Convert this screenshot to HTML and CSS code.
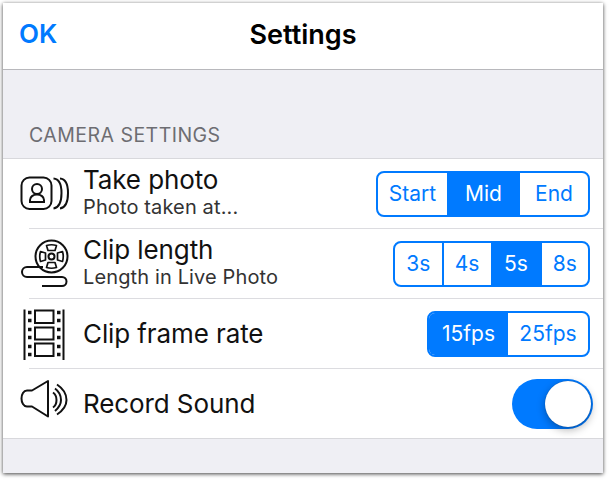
FILE: index.html
```html
<!DOCTYPE html>
<html lang="en">
<head>
<meta charset="utf-8">
<title>Settings</title>
<link rel="stylesheet" href="styles.css">
</head>
<body>
<div class="window">
  <header class="nav">
    <a class="nav-ok">OK</a>
    <h1 class="nav-title">Settings</h1>
  </header>
  <div class="section-label">CAMERA SETTINGS</div>
  <div class="list">
    <div class="row">
      <svg class="icon" viewBox="0 -2.500 60 60" fill="none" stroke="#111" stroke-width="2">
        <rect x="6.500" y="11" width="30" height="31.500" rx="8"/>
        <circle cx="22" cy="22.500" r="5"/>
        <path d="M15 35.500v-2c0-3 3-5.500 7-5.500s7 2.500 7 5.500v2z"/>
        <path d="M38.500 12C44.500 12.500 46.500 19 46.500 26.500S44.500 41 38.500 42"/>
        <path d="M45 12C51 12.500 53 19 53 26.500S51 41 45 42"/>
      </svg>
      <div class="text two">
        <div class="title">Take photo</div>
        <div class="sub">Photo taken at...</div>
      </div>
      <div class="seg">
        <span class="opt w69">Start</span><span class="opt on w73">Mid</span><span class="opt w68">End</span>
      </div>
    </div>
    <div class="sep"></div>
    <div class="row">
      <svg class="icon" viewBox="0 -2.500 60 60" fill="none" stroke="#111" stroke-width="2">
        <circle cx="36.500" cy="20" r="16"/>
        <circle cx="36.500" cy="20" r="3"/>
        <g stroke-width="1.700" stroke-linejoin="round">
          <path d="M31.500 9q5-1.500 10 0l-1.500 5h-7z"/>
          <path d="M31.500 31q5 1.500 10 0l-1.500-5h-7z"/>
          <path d="M25.500 15q-1.500 5 0 10l5-1.500v-7z"/>
          <path d="M47.500 15q1.500 5 0 10l-5-1.500v-7z"/>
        </g>
        <path d="M28 30.500H12A5 5 0 0 0 12 40.500H47A4.500 4.500 0 0 1 47 49.500H27"/>
      </svg>
      <div class="text two">
        <div class="title">Clip length</div>
        <div class="sub">Length in Live Photo</div>
      </div>
      <div class="seg">
        <span class="opt w46">3s</span><span class="opt w49 div">4s</span><span class="opt on w51">5s</span><span class="opt w46">8s</span>
      </div>
    </div>
    <div class="sep"></div>
    <div class="row">
      <svg class="icon" viewBox="0 -2.500 60 60" fill="none" stroke="#111" stroke-width="2">
        <path d="M9.500 3V53.500M48.500 3V53.500"/>
        <rect x="20" y="4" width="18.500" height="12.500"/>
        <rect x="20" y="21" width="18.500" height="12"/>
        <rect x="20" y="37" width="18.500" height="12.500"/>
        <path d="M13 6h3.500M13 14h3.500M13 23h3.500M13 31h3.500M13 40h3.500M13 48h3.500M42 6h3.500M42 14h3.500M42 23h3.500M42 31h3.500M42 40h3.500M42 48h3.500" stroke-width="3.500"/>
      </svg>
      <div class="text">
        <div class="title">Clip frame rate</div>
      </div>
      <div class="seg">
        <span class="opt on w79">15fps</span><span class="opt w80">25fps</span>
      </div>
    </div>
    <div class="sep"></div>
    <div class="row">
      <svg class="icon" viewBox="0 -2.500 60 60" fill="none" stroke="#111" stroke-width="2">
        <path d="M33 4.500V40L17 30h-5C8.500 30 6.500 26 6.500 22S8.500 14 12 14h5z" stroke-linejoin="round"/>
        <path d="M38 16c3 2 3.500 4.500 3.500 7.500S41 29 38 31"/>
        <path d="M40 12c4 3 6 7 6 11.500S44 31 40 34.500"/>
        <path d="M42 8c6 4 9.500 9 9.500 15.500S48 34 42 38"/>
      </svg>
      <div class="text">
        <div class="title">Record Sound</div>
      </div>
      <div class="switch"><div class="knob"></div></div>
    </div>
  </div>
  <div class="footer"></div>
</div>
</body>
</html>
```
FILE: styles.css
```css
* { box-sizing: border-box; }
html, body { margin: 0; padding: 0; background: #fff; }
body { width: 610px; height: 480px; overflow: hidden; font-family: Inter, "Noto Sans", sans-serif; }
.window {
  margin: 3px 0 0 3px;
  width: 600px;
  height: 470px;
  background: #efeff4;
  box-shadow: 0 1px 4px rgba(0,0,0,.75);
  display: flex;
  flex-direction: column;
}
.nav {
  height: 67px;
  flex: none;
  background: #fff;
  border-bottom: 1px solid #b8b8bc;
  display: flex;
  align-items: center;
  justify-content: center;
  position: relative;
}
.nav-ok {
  position: absolute;
  left: 16px;
  top: 14px;
  font-size: 26px;
  line-height: 34px;
  font-weight: 600;
  color: #007aff;
}
.nav-title {
  margin: 0 0 2px;
  font-size: 27px;
  font-weight: 600;
  color: #000;
  line-height: 34px;
}
.section-label {
  height: 89px;
  flex: none;
  padding: 53px 0 0 26px;
  font-size: 19.500px;
  line-height: 24px;
  letter-spacing: .47px;
  color: #6d6d72;
  border-bottom: 1px solid #d8d8dc;
}
.list { background: #fff; flex: none; }
.row {
  height: 69px;
  display: flex;
  align-items: center;
  padding: 0 13px 0 12px;
}
.sep { height: 1px; margin-left: 26px; background: #dcdce0; }
.icon { width: 60px; height: 60px; flex: none; margin-right: 9px; }
.text { flex: 1; min-width: 0; margin-left: -1px; }
.text.two { padding-bottom: 4px; }
.title { font-size: 26px; line-height: 31px; letter-spacing: -.1px; color: #111; }
.sub { font-size: 20px; line-height: 25px; letter-spacing: .13px; color: #333; }
.seg {
  display: flex;
  flex: none;
  height: 46px;
  border: 2px solid #007aff;
  border-radius: 8px;
  overflow: hidden;
  color: #007aff;
  font-size: 21px;
}
.opt { display: flex; align-items: center; justify-content: center; }
.opt.on { background: #007aff; color: #fff; }
.opt.div { border-left: 2px solid #007aff; }
.w46 { width: 46.500px; }
.w49 { width: 49px; }
.w51 { width: 51px; }
.w68 { width: 68px; }
.w69 { width: 69px; }
.w73 { width: 73px; }
.w79 { width: 79px; }
.w80 { width: 80px; }
.switch {
  flex: none;
  width: 81px;
  height: 50px;
  margin-right: -3px;
  border-radius: 25px;
  background: #007aff;
  padding: 2px;
  display: flex;
  justify-content: flex-end;
}
.knob {
  width: 46px;
  height: 46px;
  border-radius: 50%;
  background: #fff;
  box-shadow: 0 3px 8px rgba(0,0,0,.3), 0 0 1px rgba(0,0,0,.4);
}
.footer { flex: 1; border-top: 1px solid #d8d8dc; }
```
